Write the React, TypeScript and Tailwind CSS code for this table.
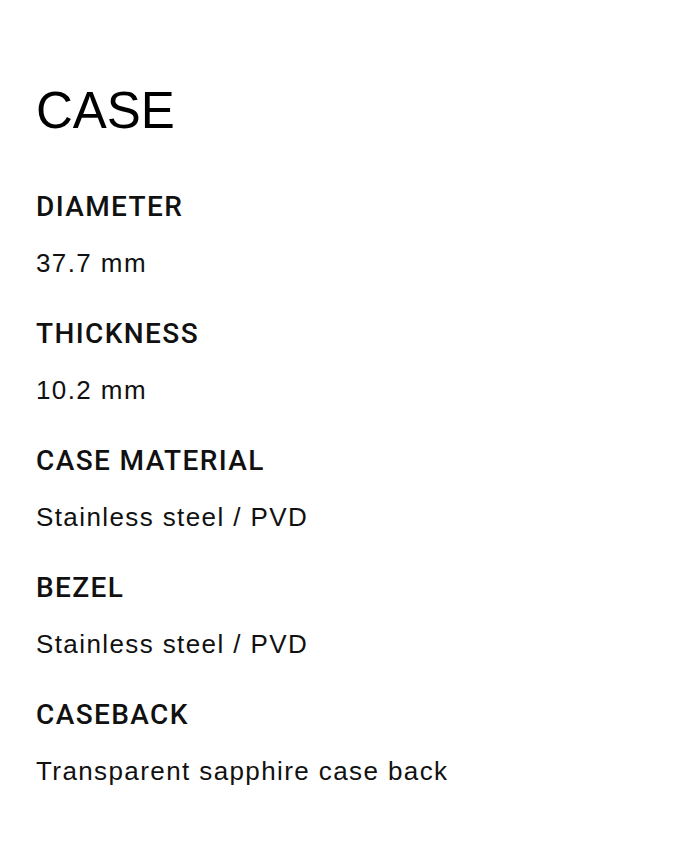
const specs = [
  { label: "DIAMETER", value: "37.7 mm" },
  { label: "THICKNESS", value: "10.2 mm" },
  { label: "CASE MATERIAL", value: "Stainless steel / PVD" },
  { label: "BEZEL", value: "Stainless steel / PVD" },
  { label: "CASEBACK", value: "Transparent sapphire case back" },
];

function SpecItem({ label, value }: { label: string; value: string }) {
  return (
    <div className="flex flex-col">
      <h3 className="h-[32px] text-[28px] leading-[32px] tracking-[1.4px] font-medium text-[#111] font-['Roboto','Liberation_Sans',sans-serif]">
        {label}
      </h3>
      <p className="mt-[24px] h-[32px] text-[26px] leading-[32px] tracking-[1.4px] text-[#111] font-['Liberation_Sans',Arial,sans-serif]">
        {value}
      </p>
    </div>
  );
}

export default function App() {
  return (
    <div className="min-h-[850px] w-[700px] bg-white pl-[36px] pt-[86px]">
      <h2 className="h-[50px] text-[51px] leading-[50px] text-black font-['Liberation_Sans',Arial,sans-serif]">
        CASE
      </h2>
      <div className="mt-[55px] flex flex-col gap-[39px]">
        {specs.map((s) => (
          <SpecItem key={s.label} label={s.label} value={s.value} />
        ))}
      </div>
    </div>
  );
}
